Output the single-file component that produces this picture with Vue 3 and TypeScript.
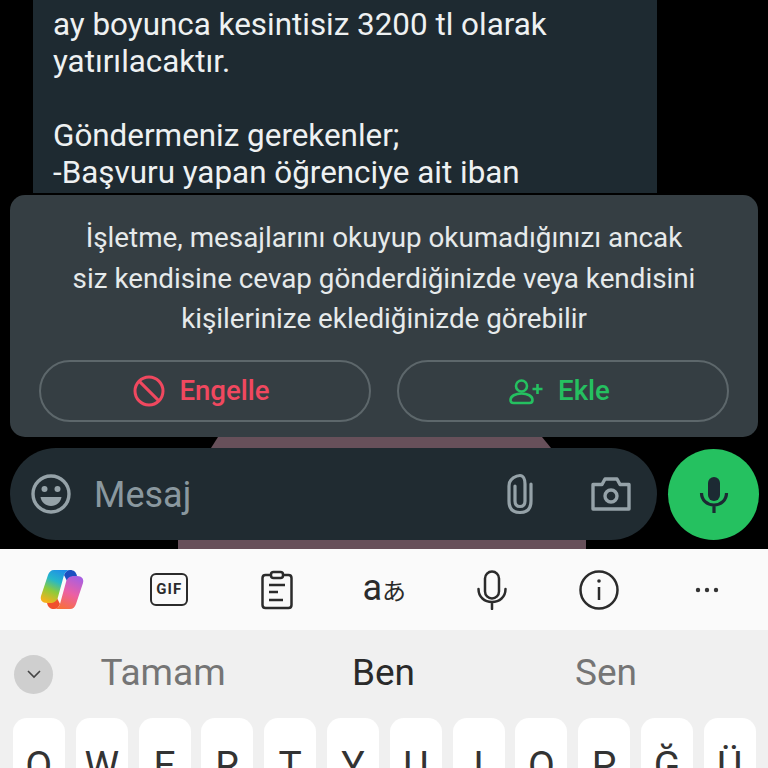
<script setup lang="ts">
const keys: string[] = ['Q', 'W', 'E', 'R', 'T', 'Y', 'U', 'I', 'O', 'P', 'Ğ', 'Ü']
</script>

<template>
  <div class="screen">
    <div class="chat">
      <div class="bubble">
        <p>ay boyunca kesintisiz 3200 tl olarak</p>
        <p>yatırılacaktır.</p>
        <p>&nbsp;</p>
        <p>Göndermeniz gerekenler;</p>
        <p>-Başvuru yapan öğrenciye ait iban</p>
      </div>

      <div class="notice">
        <div class="notice-text">
          <p>İşletme, mesajlarını okuyup okumadığınızı ancak</p>
          <p>siz kendisine cevap gönderdiğinizde veya kendisini</p>
          <p>kişilerinize eklediğinizde görebilir</p>
        </div>
        <div class="actions">
          <button class="action block">
            <svg width="32" height="32" viewBox="0 0 32 32" fill="none" stroke="currentColor" stroke-width="3">
              <circle cx="16" cy="16" r="14" />
              <path d="M6.100 6.100l19.800 19.800" />
            </svg>
            <span>Engelle</span>
          </button>
          <button class="action add">
            <svg width="35" height="30" viewBox="0 0 35 30" fill="none" stroke="currentColor" stroke-width="2.600">
              <circle cx="12.500" cy="10" r="5.500" />
              <path d="M1.500 24c0-4 5-6.500 11-6.500s11 2.500 11 6.500c0 2-1 3-3 3h-16c-2 0-3-1-3-3z" />
              <path d="M28.500 8v10M23.500 13h10" />
            </svg>
            <span>Ekle</span>
          </button>
        </div>
      </div>

      <div class="strip strip-top"></div>

      <div class="composer">
        <div class="input">
          <svg class="smile" width="40" height="40" viewBox="0 0 40 40" fill="none">
            <circle cx="20" cy="20" r="18" stroke="currentColor" stroke-width="3.400" />
            <circle cx="13.500" cy="15" r="3" fill="currentColor" />
            <circle cx="26.500" cy="15" r="3" fill="currentColor" />
            <path d="M9.500 23h21c-1 5.500-5 9-10.500 9s-9.500-3.500-10.500-9z" fill="currentColor" />
          </svg>
          <span class="placeholder">Mesaj</span>
          <svg class="clip" width="28" height="42" viewBox="0 0 28 42" fill="none" stroke="currentColor" stroke-width="3.200" stroke-linecap="round">
            <path d="M9 13v15c0 3.500 2 5.500 5 5.500s5-2 5-5.500V11C19 6 17 2.500 14 2.500S3 5 3 13v15c0 7.500 4 11.500 11 11.500S25 35.500 25 28V11" />
          </svg>
          <svg class="camera" width="40" height="36" viewBox="0 0 40 36" fill="none" stroke="currentColor" stroke-width="3.400">
            <path d="M2 8.500h9l3-5.500h12l3 5.500h9v24.500H2z" stroke-linejoin="round" />
            <circle cx="20" cy="20" r="6" />
          </svg>
        </div>
        <button class="send">
          <svg width="30" height="38" viewBox="0 0 30 38" fill="none">
            <rect x="9" y="1" width="12" height="24" rx="6" fill="#1c2a33" />
            <path d="M2.500 17c0 7 5.500 12 12.500 12s12.500-5 12.500-12M15 29v8" stroke="#1c2a33" stroke-width="3.200" />
          </svg>
        </button>
      </div>

      <div class="strip strip-bottom"></div>
    </div>

    <div class="keyboard">
      <div class="toolbar">
        <svg width="44" height="41" viewBox="0 0 44 41">
          <defs>
            <linearGradient id="copLeft" x1="0.700" y1="0" x2="0.300" y2="1">
              <stop offset="0" stop-color="#1f8fe8" />
              <stop offset="0.350" stop-color="#26b8c8" />
              <stop offset="0.650" stop-color="#8ccb3c" />
              <stop offset="1" stop-color="#f5b21c" />
            </linearGradient>
            <linearGradient id="copRight" x1="0.700" y1="0" x2="0.300" y2="1">
              <stop offset="0" stop-color="#a95fe0" />
              <stop offset="0.500" stop-color="#ec5fa4" />
              <stop offset="1" stop-color="#f8703a" />
            </linearGradient>
          </defs>
          <path d="M24 6c1-3 3-5 6-5 4 0 6 2 7 6l1 5H27z" fill="#1c4fc0" />
          <path d="M20 35c-1 3-3 5-6 5-4 0-6-2-7-6l-1-5h11z" fill="#f0502c" />
          <path d="M14 1h16c-3 0-5 2-6 5l-6 22c-1 4-4 6-8 6H7C2 34 0 31 1 27L8 6c1-3 3-5 6-5z" fill="url(#copLeft)" />
          <path d="M30 40H14c3 0 5-2 6-5l6-22c1-4 4-6 8-6h3c5 0 7 3 6 7l-7 21c-1 3-3 5-6 5z" fill="url(#copRight)" />
        </svg>
        <div class="gif">GIF</div>
        <svg width="32" height="40" viewBox="0 0 32 40" fill="none" stroke="#2b2b2b" stroke-width="2.500">
          <path d="M10 5H4.500C2.500 5 1.500 6 1.500 8v27c0 2 1 3 3 3h23c2 0 3-1 3-3V8c0-2-1-3-3-3H22" />
          <rect x="10" y="2" width="12" height="6" rx="2.500" />
          <path d="M8 15h16M8 22h9M8 30h14" />
        </svg>
        <div class="translate">a<span>あ</span></div>
        <svg width="30" height="40" viewBox="0 0 30 40" fill="none" stroke="#2b2b2b" stroke-width="2.500" stroke-linecap="round">
          <rect x="8" y="1.500" width="14" height="27" rx="7" />
          <path d="M1.500 19c0 8 6 13 13.500 13s13.500-5 13.500-13M15 32v7" />
        </svg>
        <svg width="40" height="40" viewBox="0 0 40 40" fill="none" stroke="#2b2b2b" stroke-width="2.500">
          <circle cx="20" cy="20" r="18.500" />
          <path d="M20 17v13" />
          <circle cx="20" cy="11" r="1.800" fill="#2b2b2b" stroke="none" />
        </svg>
        <svg width="24" height="6" viewBox="0 0 24 6" fill="#333">
          <circle cx="3" cy="3" r="2.200" />
          <circle cx="12" cy="3" r="2.200" />
          <circle cx="21" cy="3" r="2.200" />
        </svg>
      </div>

      <div class="suggestions">
        <div class="collapse">
          <svg width="16" height="10" viewBox="0 0 16 10" fill="none" stroke="#444" stroke-width="1.600">
            <path d="M2 2l6 6 6-6" />
          </svg>
        </div>
        <div class="words">
          <span class="word">Tamam</span>
          <span class="word main">Ben</span>
          <span class="word">Sen</span>
        </div>
      </div>

      <div class="keys">
        <div v-for="key in keys" :key="key" class="key">{{ key }}</div>
      </div>
    </div>
  </div>
</template>

<style>
html,
body {
  margin: 0;
  overflow: hidden;
  background: #000;
}
</style>

<style scoped>
.screen {
  width: 768px;
  height: 768px;
  display: flex;
  flex-direction: column;
  overflow: hidden;
  background: #000;
  font-family: Roboto, "Noto Sans", sans-serif;
}

p {
  margin: 0;
}

.chat {
  height: 549px;
  flex: none;
  display: flex;
  flex-direction: column;
}

.bubble {
  width: 624px;
  height: 193px;
  margin-left: 33px;
  margin-bottom: 2px;
  padding: 6px 20px 0;
  box-sizing: border-box;
  background: #1e2a31;
  color: #eef1f2;
  font-size: 31.400px;
  line-height: 37px;
  white-space: nowrap;
}

.notice {
  width: 748px;
  height: 242px;
  margin-left: 10px;
  padding-top: 23px;
  box-sizing: border-box;
  background: #353e43;
  border-radius: 15px;
}

.notice-text {
  color: #e6eaeb;
  font-size: 27.800px;
  line-height: 40.500px;
  text-align: center;
  white-space: nowrap;
}

.actions {
  display: flex;
  gap: 26px;
  margin-top: 20px;
  padding: 0 29px;
}

.action {
  flex: 1;
  height: 62px;
  display: flex;
  align-items: center;
  justify-content: center;
  gap: 14px;
  padding: 0 7px 0 0;
  background: transparent;
  border: 2px solid #5d676b;
  border-radius: 31px;
  font-family: inherit;
  font-size: 27.600px;
  font-weight: 500;
}

.block {
  color: #f0485f;
}

.add {
  color: #25c060;
}

.strip {
  flex: none;
  background: #67505a;
}

.strip-top {
  height: 11px;
  width: 340px;
  margin-left: 211px;
  clip-path: polygon(7px 0, 331px 0, 100% 100%, 0 100%);
}

.strip-bottom {
  height: 9px;
  width: 408px;
  margin-left: 178px;
}

.composer {
  height: 92px;
  flex: none;
  display: flex;
  gap: 11px;
  padding-left: 10px;
}

.input {
  width: 647px;
  display: flex;
  align-items: center;
  background: #202b31;
  border-radius: 46px;
  color: #95a2a8;
  padding: 0 26px 0 21px;
  box-sizing: border-box;
}

.placeholder {
  flex: 1;
  margin-left: 23px;
  padding-top: 2px;
  font-size: 36px;
  color: #8a989f;
}

.clip {
  margin-right: 57px;
}

.send {
  width: 91px;
  height: 91px;
  margin-top: 1px;
  padding: 0;
  border: none;
  border-radius: 50%;
  background: #25c160;
  display: flex;
  align-items: center;
  justify-content: center;
}

.keyboard {
  flex: 1;
  display: flex;
  flex-direction: column;
  background: #f0f0f0;
  min-height: 0;
}

.toolbar {
  height: 81px;
  flex: none;
  display: grid;
  grid-template-columns: repeat(7, 107.500px);
  justify-items: center;
  align-items: center;
  padding-left: 8px;
  background: #fafafa;
  color: #2b2b2b;
}

.gif {
  width: 38px;
  height: 33px;
  box-sizing: border-box;
  border: 2.500px solid #2b2b2b;
  border-radius: 6px;
  font-size: 15px;
  font-weight: 700;
  line-height: 28px;
  text-align: center;
  letter-spacing: 1px;
}

.translate {
  font-size: 36px;
  font-family: Roboto, "Noto Sans CJK JP", sans-serif;
  line-height: 40px;
  white-space: nowrap;
}

.translate span {
  font-size: 24px;
}

.suggestions {
  height: 88px;
  flex: none;
  display: flex;
  align-items: center;
  font-size: 37px;
}

.collapse {
  width: 39px;
  height: 39px;
  flex: none;
  margin-left: 14px;
  border-radius: 50%;
  background: #cfcfcf;
  display: flex;
  align-items: center;
  justify-content: center;
}

.words {
  display: grid;
  grid-template-columns: 220px 221px 224px;
  justify-items: center;
  margin-top: -2px;
}

.word {
  color: #757575;
  line-height: 40px;
}

.main {
  color: #2a2a2a;
}

.keys {
  display: flex;
  gap: 10.800px;
  padding-left: 13px;
}

.key {
  width: 52px;
  height: 90px;
  flex: none;
  padding-top: 28px;
  box-sizing: border-box;
  background: #fff;
  border-radius: 14px;
  color: #333;
  font-size: 39px;
  line-height: 40px;
  text-align: center;
}
</style>
